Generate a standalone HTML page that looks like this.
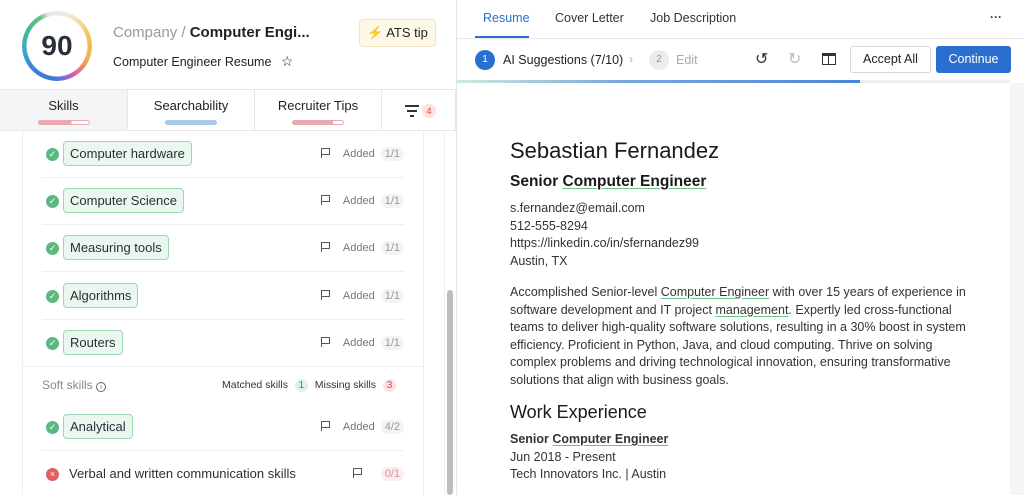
<!DOCTYPE html>
<html><head><meta charset="utf-8"><style>
*{margin:0;padding:0;box-sizing:border-box}
body{width:1024px;height:495px;overflow:hidden;background:#fff;font-family:"Liberation Sans",sans-serif;color:#222;position:relative}
.a{position:absolute}
.ring{left:22px;top:11px;width:70px;height:70px;border-radius:50%;background:conic-gradient(from 0deg,#e8ece8 0deg,#f3e6c8 30deg,#f2c45a 70deg,#f0b34a 110deg,#ee8a5a 130deg,#d45aa8 150deg,#8a6ad8 165deg,#3a7ad8 185deg,#3b82d6 230deg,#3aa8c8 260deg,#48b890 300deg,#6cbf80 330deg,#e0ece4 345deg);-webkit-mask:radial-gradient(circle,transparent 30px,#000 31px);mask:radial-gradient(circle,transparent 30px,#000 31px)}
.score{left:22px;top:11px;width:70px;height:70px;text-align:center;line-height:70px;font-size:28px;font-weight:bold;color:#2a2f3a}
.tab{top:90px;height:41px;border-bottom:1px solid #e6e8eb;border-right:1px solid #e6e8eb;text-align:center;font-size:13px;padding-top:8px;color:#222}
.bar{position:absolute;left:50%;margin-left:-26px;top:30px;width:52px;height:5px;border-radius:3px}
.row{left:42px;width:362px;height:47px;border-bottom:1px solid #eceef0}
.chk{position:absolute;left:4px;top:17px;width:13px;height:13px;border-radius:50%;background:#5cb87f;color:#fff;font-size:9px;text-align:center;line-height:13px}
.pill{position:absolute;left:21px;top:10px;height:25px;border:1px solid #9fd6b3;background:#e9f7ef;border-radius:4px;padding:0 6px;font-size:13px;line-height:23px;color:#2a2f3a}
.rt{position:absolute;right:0;top:16px;font-size:11px;color:#777}
.rt i{font-style:normal;display:inline-block;background:#f2f3f5;border-radius:7px;padding:1px 4px;color:#999;margin-left:6px}
.flag{display:inline-block;width:10px;height:10px;border-left:1.5px solid #555;position:relative;margin-right:12px;vertical-align:-1px}
.flag:after{content:"";position:absolute;left:0;top:0;width:7px;height:5px;border:1.3px solid #555;border-left:none}
.r{font-size:12.5px;color:#333;left:510px;line-height:17.5px}
.u{text-decoration:underline;text-decoration-color:#6cc48c;text-underline-offset:2px}
.fl{position:absolute;height:1.6px;background:#333}
</style></head><body>
<div class="a ring"></div><div class="a score">90</div>
<div class="a" style="left:113px;top:24px;font-size:15px;color:#999">Company / <b style="color:#222;font-weight:bold">Computer Engi...</b></div>
<div class="a" style="left:113px;top:53px;font-size:12.5px;color:#222">Computer Engineer Resume <span style="margin-left:6px;font-size:14px">☆</span></div>
<div class="a" style="left:359px;top:19px;width:77px;height:28px;border:1px solid #f0e4c0;background:#fdf8e8;border-radius:4px;font-size:13px;line-height:26px;text-align:center"><span style="color:#f2b620">⚡</span> ATS tip</div>
<div class="a" style="left:0;top:89px;width:456px;height:1px;background:#e6e8eb"></div>
<div class="a tab" style="left:0;width:128px;background:#f3f5f7">Skills<div class="bar" style="background:linear-gradient(90deg,#eaa9ae 65%,#fff 65%);border:1px solid #eaa9ae"></div></div>
<div class="a tab" style="left:128px;width:127px">Searchability<div class="bar" style="background:#a9c8ea"></div></div>
<div class="a tab" style="left:255px;width:127px">Recruiter Tips<div class="bar" style="background:linear-gradient(90deg,#eaa9ae 80%,#fff 80%);border:1px solid #eaa9ae"></div></div>
<div class="a tab" style="left:382px;width:74px">
<div class="fl" style="left:23px;top:15px;width:14px"></div><div class="fl" style="left:25px;top:20px;width:10px"></div><div class="fl" style="left:28px;top:25px;width:4px"></div>
<span style="position:absolute;left:40px;top:14px;width:14px;height:14px;border-radius:50%;background:#fde2e2;color:#d44;font-size:9px;line-height:14px">4</span></div>
<div class="a" style="left:22px;top:131px;width:1px;height:364px;background:#eceef0"></div>
<div class="a" style="left:423px;top:131px;width:1px;height:364px;background:#eceef0"></div>
<div class="a" style="left:444px;top:131px;width:1px;height:364px;background:#eceef0"></div>
<div class="a" style="left:447px;top:290px;width:6px;height:205px;border-radius:3px;background:#bdbdbd"></div>
<div class="a" style="left:456px;top:0;width:1px;height:495px;background:#e3e5e8"></div>
<div class="a row" style="top:131px"><div class="chk">✓</div><div class="pill">Computer hardware</div><div class="rt"><span class="flag"></span>Added<i>1/1</i></div></div>
<div class="a row" style="top:178px"><div class="chk">✓</div><div class="pill">Computer Science</div><div class="rt"><span class="flag"></span>Added<i>1/1</i></div></div>
<div class="a row" style="top:225px"><div class="chk">✓</div><div class="pill">Measuring tools</div><div class="rt"><span class="flag"></span>Added<i>1/1</i></div></div>
<div class="a row" style="top:273px"><div class="chk">✓</div><div class="pill">Algorithms</div><div class="rt"><span class="flag"></span>Added<i>1/1</i></div></div>
<div class="a row" style="top:320px;border-bottom:none"><div class="chk">✓</div><div class="pill">Routers</div><div class="rt"><span class="flag"></span>Added<i>1/1</i></div></div>
<div class="a" style="left:22px;top:366px;width:402px;height:1px;background:#eceef0"></div>
<div class="a" style="left:42px;top:378px;font-size:12px;color:#888">Soft skills <span style="display:inline-block;width:10px;height:10px;border:1px solid #666;border-radius:50%;font-size:7px;text-align:center;line-height:9px;color:#666">i</span></div>
<div class="a" style="left:222px;top:379px;font-size:10.5px;color:#333">Matched skills <span style="display:inline-block;width:13px;height:13px;border-radius:50%;background:#dff3e6;color:#3a9a5a;text-align:center;line-height:13px;margin:0 4px">1</span> Missing skills <span style="display:inline-block;width:13px;height:13px;border-radius:50%;background:#fde2e2;color:#d44;text-align:center;line-height:13px;margin-left:4px">3</span></div>
<div class="a row" style="top:404px"><div class="chk">✓</div><div class="pill">Analytical</div><div class="rt"><span class="flag"></span>Added<i>4/2</i></div></div>
<div class="a row" style="top:451px;border-bottom:none"><div class="chk" style="background:#e06060">×</div><div style="position:absolute;left:27px;top:15px;font-size:13px;color:#2a2f3a">Verbal and written communication skills</div><div class="rt"><span class="flag"></span><i style="background:#fdecee;color:#c99">0/1</i></div></div>
<div class="a" style="left:483px;top:11px;font-size:12.5px;color:#2a6fd0">Resume</div>
<div class="a" style="left:475px;top:36px;width:54px;height:2px;background:#2a6fd0"></div>
<div class="a" style="left:555px;top:11px;font-size:12.5px;color:#333">Cover Letter</div>
<div class="a" style="left:650px;top:11px;font-size:12.5px;color:#333">Job Description</div>
<div class="a" style="left:990px;top:10px;font-size:12px;color:#333;font-weight:bold">···</div>
<div class="a" style="left:457px;top:38px;width:567px;height:1px;background:#e6e8eb"></div>
<div class="a" style="left:475px;top:50px;width:20px;height:20px;border-radius:50%;background:#2a6fd0;color:#fff;font-size:10px;text-align:center;line-height:20px">1</div>
<div class="a" style="left:503px;top:53px;font-size:12.5px;color:#222">AI Suggestions (7/10)</div>
<div class="a" style="left:629px;top:52px;font-size:12px;color:#aaa">›</div>
<div class="a" style="left:649px;top:50px;width:20px;height:20px;border-radius:50%;background:#ececec;color:#999;font-size:10px;text-align:center;line-height:20px">2</div>
<div class="a" style="left:676px;top:53px;font-size:12.5px;color:#aaa">Edit</div>
<div class="a" style="left:755px;top:49px;font-size:16px;color:#333">↺</div>
<div class="a" style="left:788px;top:49px;font-size:16px;color:#bbb">↻</div>
<div class="a" style="left:822px;top:53px;width:14px;height:12px;border:1.5px solid #333;border-top-width:3px"><div style="position:absolute;left:4.5px;top:0;width:1.5px;height:8px;background:#333"></div></div>
<div class="a" style="left:850px;top:46px;width:81px;height:27px;border:1px solid #d6d9dd;border-radius:3px;font-size:12.5px;line-height:25px;text-align:center;color:#222">Accept All</div>
<div class="a" style="left:936px;top:46px;width:75px;height:27px;background:#2a6fd0;border-radius:3px;font-size:12.5px;line-height:27px;text-align:center;color:#fff">Continue</div>
<div class="a" style="left:457px;top:80px;width:553px;height:3px;background:#eceef0"></div>
<div class="a" style="left:457px;top:80px;width:403px;height:3px;background:linear-gradient(90deg,#cfeadc,#7aa8dc 40%,#4a86d6)"></div>
<div class="a" style="left:1010px;top:83px;width:14px;height:412px;background:#f4f5f6"></div>
<div class="a" style="left:510px;top:138px;font-size:22px;color:#1a1a1a">Sebastian Fernandez</div>
<div class="a" style="left:510px;top:173px;font-size:15.5px;color:#1a1a1a;font-weight:bold">Senior <span class="u">Computer Engineer</span></div>
<div class="a r" style="top:200px">s.fernandez@email.com<br>512-555-8294<br>https://linkedin.co/in/sfernandez99<br>Austin, TX</div>
<div class="a r" style="top:284px;width:470px">Accomplished Senior-level <span class="u">Computer Engineer</span> with over 15 years of experience in software development and IT project <span class="u">management</span>. Expertly led cross-functional teams to deliver high-quality software solutions, resulting in a 30% boost in system efficiency. Proficient in Python, Java, and cloud computing. Thrive on solving complex problems and driving technological innovation, ensuring transformative solutions that align with business goals.</div>
<div class="a" style="left:510px;top:402px;font-size:18px;color:#1a1a1a">Work Experience</div>
<div class="a r" style="top:431px"><b>Senior <span class="u">Computer Engineer</span></b><br>Jun 2018 - Present<br>Tech Innovators Inc. | Austin</div>
</body></html>
